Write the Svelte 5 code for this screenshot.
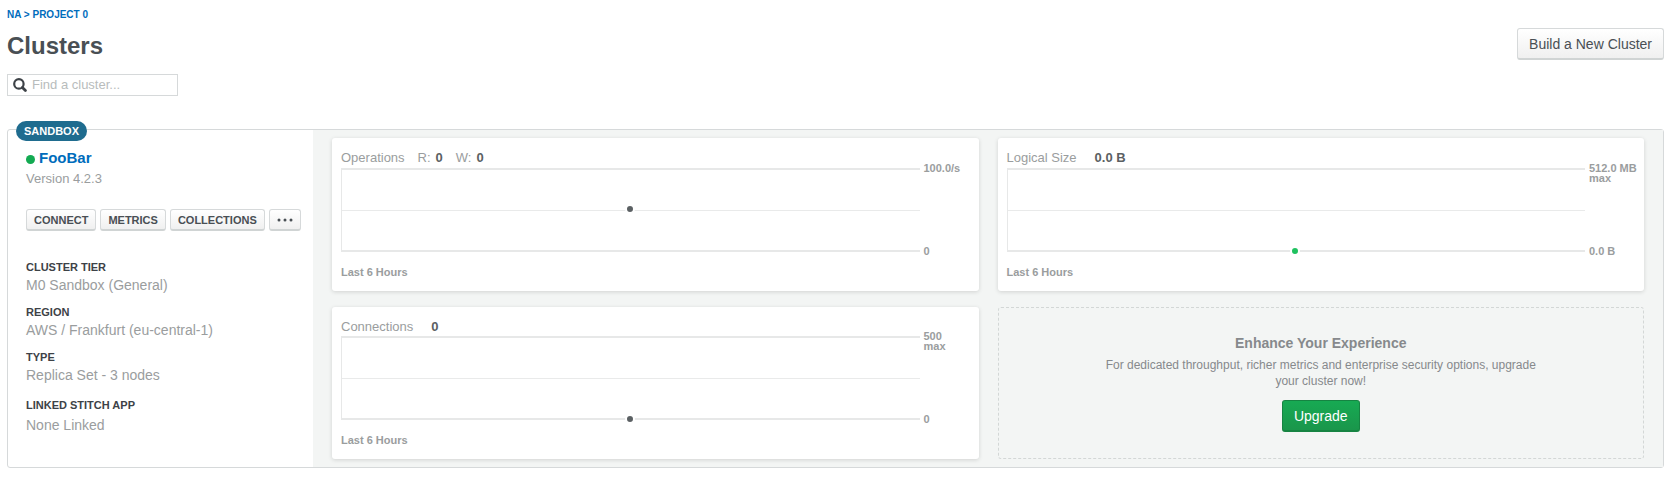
<script>
  const actions = ['Connect', 'Metrics', 'Collections'];

  const details = [
    { label: 'Cluster Tier', value: 'M0 Sandbox (General)' },
    { label: 'Region', value: 'AWS / Frankfurt (eu-central-1)' },
    { label: 'Type', value: 'Replica Set - 3 nodes' },
    { label: 'Linked Stitch App', value: 'None Linked', spaced: true },
  ];

  const charts = [
    {
      title: 'Operations',
      readings: [
        { key: 'R:', value: '0' },
        { key: 'W:', value: '0' },
      ],
      max: '100.0/s',
      min: '0',
      dot: 'middle',
    },
    {
      title: 'Logical Size',
      readings: [{ value: '0.0 B' }],
      max: '512.0 MB',
      note: 'max',
      min: '0.0 B',
      dot: 'bottom',
      green: true,
    },
    {
      title: 'Connections',
      readings: [{ value: '0' }],
      max: '500',
      note: 'max',
      min: '0',
      dot: 'bottom',
      tight: true,
    },
  ];

  let query = $state('');
</script>

<main class="page">
  <nav class="crumbs"><a href="#project">NA &gt; Project 0</a></nav>

  <header class="head">
    <h1>Clusters</h1>
    <button class="btn large" type="button">Build a New Cluster</button>
  </header>

  <label class="search">
    <svg viewBox="0 0 14 14" width="14" height="14" aria-hidden="true">
      <circle cx="5.9" cy="5.9" r="4.7" fill="none" stroke="#3d4247" stroke-width="2.2" />
      <path d="M9.4 9.4l3 3" stroke="#3d4247" stroke-width="2.8" stroke-linecap="round" />
    </svg>
    <input type="text" placeholder="Find a cluster..." aria-label="Find a cluster" bind:value={query} />
  </label>

  <section class="cluster">
    <span class="badge">Sandbox</span>

    <div class="summary">
      <h2><span class="status"></span><a href="#cluster">FooBar</a></h2>
      <p class="version">Version 4.2.3</p>

      <div class="actions">
        {#each actions as action}
          <button class="btn small" type="button">{action}</button>
        {/each}
        <button class="btn small more" type="button" aria-label="More actions">
          <svg viewBox="0 0 16 4" width="16" height="4" aria-hidden="true">
            <circle cx="2" cy="2" r="1.5" />
            <circle cx="8" cy="2" r="1.5" />
            <circle cx="14" cy="2" r="1.5" />
          </svg>
        </button>
      </div>

      <dl>
        {#each details as item}
          <div class:spaced={item.spaced}>
            <dt>{item.label}</dt>
            <dd>{item.value}</dd>
          </div>
        {/each}
      </dl>
    </div>

    <div class="metrics">
      {#each charts as chart}
        <article class="chart" class:tight={chart.tight}>
          <h3>
            <span class="name">{chart.title}</span>
            {#each chart.readings as reading}
              <span class="reading" class:keyed={reading.key}>
                {#if reading.key}<span>{reading.key}</span>{/if}
                <b>{reading.value}</b>
              </span>
            {/each}
          </h3>
          <div class="graph">
            <div class="plot">
              <div class="mid"></div>
              <i class="dot {chart.dot}" class:green={chart.green}></i>
            </div>
            <div class="axis">
              <span>{chart.max}{#if chart.note}<br />{chart.note}{/if}</span>
              <span>{chart.min}</span>
            </div>
          </div>
          <p class="range">Last 6 Hours</p>
        </article>
      {/each}

      <aside class="upsell">
        <h3>Enhance Your Experience</h3>
        <p>For dedicated throughput, richer metrics and enterprise security options, upgrade your cluster now!</p>
        <button class="btn large primary" type="button">Upgrade</button>
      </aside>
    </div>
  </section>
</main>

<style>
  :global(body) {
    background: #fff;
  }

  .page {
    padding: 8px 10px 11px 7px;
    font-family: "Liberation Sans", Arial, sans-serif;
    font-size: 13px;
    line-height: 16px;
    color: #494f54;
  }

  .page * {
    box-sizing: border-box;
  }

  h1, h2, h3, p, dl, dd {
    margin: 0;
  }

  a {
    color: #006cbc;
    text-decoration: none;
  }

  .crumbs {
    font-size: 10px;
    line-height: 14px;
    font-weight: bold;
    text-transform: uppercase;
  }

  .head {
    display: flex;
    justify-content: space-between;
    align-items: flex-start;
    padding-top: 6px;
  }

  h1 {
    padding-top: 4px;
    font-size: 24px;
    line-height: 28px;
    color: #494f54;
  }

  .btn {
    font-family: inherit;
    color: #494f54;
    border: 1px solid #d6d9da;
    border-bottom: 2px solid #d0d4d4;
    border-radius: 3px;
    background: linear-gradient(#fff, #f0f0f0);
    white-space: nowrap;
    cursor: pointer;
  }

  .large {
    height: 32px;
    padding: 0 11px;
    font-size: 14px;
    line-height: 28px;
  }

  .small {
    height: 22px;
    padding: 0 7px;
    font-size: 11px;
    line-height: 18px;
    font-weight: bold;
    text-transform: uppercase;
  }

  .more {
    display: flex;
    align-items: center;
  }

  .more svg {
    fill: #494f54;
  }

  .primary {
    color: #fff;
    border-color: #168442;
    background: linear-gradient(#17aa53, #1a964b);
  }

  .search {
    display: flex;
    align-items: center;
    gap: 5px;
    width: 171px;
    height: 22px;
    margin-top: 14px;
    padding-left: 5px;
    border: 1px solid #d6d9da;
  }

  .search input {
    flex: 1;
    min-width: 0;
    padding: 0;
    border: 0;
    outline: 0;
    background: none;
    font: inherit;
    color: #494f54;
  }

  .search input::placeholder {
    color: #b8bcbc;
    opacity: 1;
  }

  .cluster {
    position: relative;
    display: flex;
    margin-top: 33px;
    border: 1px solid #d6d9da;
    border-radius: 3px;
  }

  .badge {
    position: absolute;
    top: -9px;
    left: 8px;
    padding: 0 8px;
    border-radius: 10px;
    background: #1f6c8f;
    color: #fff;
    font-size: 11px;
    line-height: 20px;
    font-weight: bold;
    text-transform: uppercase;
  }

  .summary {
    flex: none;
    width: 305px;
    padding: 18px 0 0 18px;
  }

  h2 {
    display: flex;
    align-items: center;
    gap: 4px;
    font-size: 15px;
    line-height: 20px;
  }

  .status {
    width: 9px;
    height: 9px;
    margin-top: 2px;
    border-radius: 50%;
    background: #13aa52;
  }

  .version {
    margin-top: 3px;
    color: #9a9d9e;
  }

  .actions {
    display: flex;
    gap: 4px;
    margin-top: 22px;
  }

  dl {
    display: grid;
    gap: 9px;
    padding-top: 27px;
  }

  dt {
    font-size: 11px;
    line-height: 18px;
    font-weight: bold;
    text-transform: uppercase;
    color: #3d4247;
  }

  dd {
    font-size: 14px;
    line-height: 18px;
    color: #9a9d9e;
  }

  .spaced {
    padding-top: 3px;
  }

  .spaced dd {
    padding-top: 2px;
  }

  .metrics {
    flex: 1;
    display: grid;
    grid-template-columns: repeat(2, minmax(0, 1fr));
    gap: 16px 19px;
    padding: 8px 19px;
    background: #f3f5f4;
  }

  .chart {
    padding: 0 9px;
    border-radius: 3px;
    background: #fff;
    box-shadow: 0 1px 4px rgba(0, 0, 0, 0.14);
  }

  .chart h3 {
    display: flex;
    height: 30px;
    padding-top: 12px;
    font-size: 13px;
    font-weight: normal;
    color: #9a9d9e;
  }

  .tight h3 {
    height: 29px;
  }

  .reading {
    display: flex;
    gap: 5px;
    margin-left: 18px;
  }

  .keyed {
    margin-left: 13px;
  }

  .reading b {
    color: #5b6063;
  }

  .graph {
    display: flex;
    gap: 4px;
    height: 84px;
  }

  .plot {
    position: relative;
    flex: 1;
    border: 2px solid #e7e8e8;
    border-width: 2px 0 2px 1px;
  }

  .mid {
    height: 41px;
    border-bottom: 1px solid #e9eaea;
  }

  .dot {
    position: absolute;
    left: 50%;
    width: 10px;
    height: 10px;
    margin-left: -6px;
    border: 2px solid #fff;
    border-radius: 50%;
    background: #5b6063;
  }

  .middle {
    top: 34px;
  }

  .bottom {
    bottom: -6px;
  }

  .green {
    background: #1fc15f;
  }

  .axis {
    display: flex;
    flex-direction: column;
    justify-content: space-between;
    width: 46px;
    margin: -5px 0 -4px;
    white-space: nowrap;
    font-size: 11px;
    line-height: 10px;
    font-weight: bold;
    color: #9a9d9e;
  }

  .range {
    height: 39px;
    padding-top: 12px;
    font-size: 11px;
    font-weight: bold;
    color: #9a9d9e;
  }

  .upsell {
    display: flex;
    flex-direction: column;
    align-items: center;
    padding-top: 27px;
    border: 1px dashed #d3d7d6;
    border-radius: 3px;
    text-align: center;
    color: #86898c;
  }

  .upsell h3 {
    font-size: 14px;
  }

  .upsell p {
    max-width: 450px;
    margin: 6px 0 11px;
    font-size: 12px;
  }
</style>
